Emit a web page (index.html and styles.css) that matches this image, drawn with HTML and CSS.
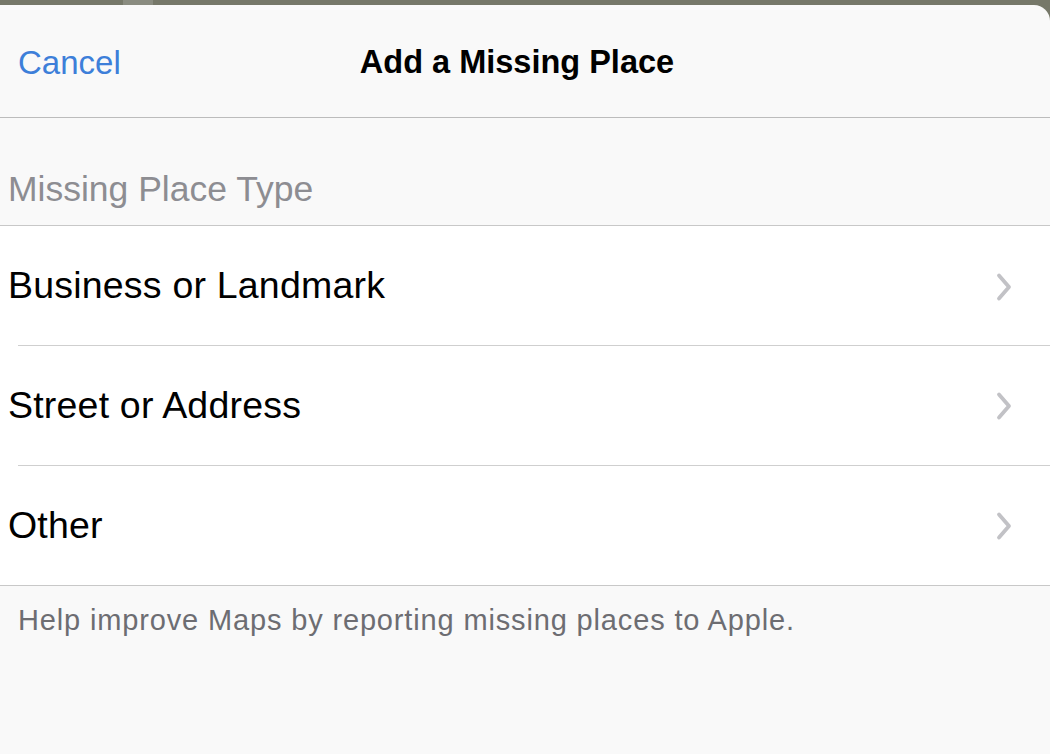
FILE: index.html
```html
<!DOCTYPE html>
<html>
<head>
<meta charset="utf-8">
<link rel="stylesheet" href="styles.css">
</head>
<body>
<div class="topstrip"><span class="seg"></span></div>
<div class="sheet">
  <header class="nav">
    <span class="cancel">Cancel</span>
    <span class="title">Add a Missing Place</span>
  </header>
  <div class="section-head">Missing Place Type</div>
  <ul class="list">
    <li class="row"><span>Business or Landmark</span><svg class="chev" viewBox="0 0 20 30" width="20" height="30"><path d="M5 3.5 L15 15 L5 26.5" fill="none" stroke="#c2c2c6" stroke-width="3.8" stroke-linecap="round" stroke-linejoin="round"/></svg></li>
    <li class="row"><span>Street or Address</span><svg class="chev" viewBox="0 0 20 30" width="20" height="30"><path d="M5 3.5 L15 15 L5 26.5" fill="none" stroke="#c2c2c6" stroke-width="3.8" stroke-linecap="round" stroke-linejoin="round"/></svg></li>
    <li class="row"><span>Other</span><svg class="chev" viewBox="0 0 20 30" width="20" height="30"><path d="M5 3.5 L15 15 L5 26.5" fill="none" stroke="#c2c2c6" stroke-width="3.8" stroke-linecap="round" stroke-linejoin="round"/></svg></li>
  </ul>
  <p class="footer">Help improve Maps by reporting missing places to Apple.</p>
</div>
</body>
</html>
```
FILE: styles.css
```css
html, body {
  margin: 0;
  padding: 0;
  height: 100%;
  background: #767869;
  overflow: hidden;
  font-family: "Liberation Sans", Arial, sans-serif;
}
.topstrip {
  height: 5px;
  background: #767869;
  display: flex;
}
.seg {
  width: 30px;
  margin-left: 123px;
  background: #8a8c80;
}
.sheet {
  background: #f9f9f9;
  border-top-right-radius: 16px;
  height: 749px;
  display: flex;
  flex-direction: column;
}
.nav {
  height: 112px;
  border-bottom: 1px solid #bcbcbc;
  display: flex;
  align-items: center;
  justify-content: center;
  position: relative;
}
.cancel {
  position: absolute;
  left: 18px;
  top: 39px;
  font-size: 33px;
  color: #3d7fd9;
}
.title {
  font-size: 32.5px;
  font-weight: bold;
  color: #000;
  margin-right: 16px;
  margin-top: 2px;
}
.section-head {
  height: 108px;
  box-sizing: border-box;
  padding: 51px 0 0 8px;
  font-size: 35.5px;
  color: #8d8d92;
  border-bottom: 1px solid #c8c8c8;
}
.list {
  list-style: none;
  margin: 0;
  padding: 0;
  background: #fff;
  border-bottom: 1px solid #c8c8c8;
}
.row {
  height: 120px;
  display: flex;
  align-items: center;
  justify-content: space-between;
  padding: 0 36px 0 8px;
  font-size: 37.5px;
  letter-spacing: 0.2px;
  color: #000;
  position: relative;
  box-sizing: border-box;
}
.row + .row::before {
  content: "";
  position: absolute;
  top: 0;
  left: 18px;
  right: 0;
  height: 1px;
  background: #cfcfcf;
}
.row:first-child { height: 119px; }
.chev { margin-top: 2px; }
.footer {
  margin: 0;
  padding: 18px 0 0 18px;
  font-size: 29px;
  color: #6d6d72;
  letter-spacing: 0.85px;
}
```
